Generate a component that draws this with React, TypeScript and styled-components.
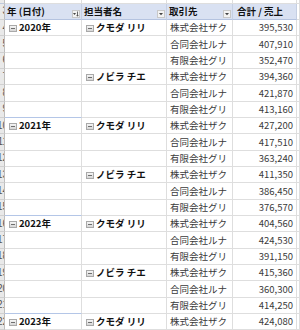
import React from "react";
import styled, { createGlobalStyle } from "styled-components";

const Global = createGlobalStyle`
  html, body { margin: 0; padding: 0; background: #ffffff; }
  body { font-family: "Noto Sans CJK JP", "Noto Sans", sans-serif; overflow: hidden; }
`;

const ROW_H = 16.33;

const Sheet = styled.div`
  display: grid;
  grid-template-columns: 5px 77px 85px 66px 64px 3px;
  grid-template-rows: 3.67px ${ROW_H}px repeat(19, ${ROW_H}px);
  width: 300px;
  height: 330px;
  overflow: hidden;
  font-size: 9.5px;
  line-height: 1;
`;

const RowHead = styled.div<{ $top?: boolean }>`
  box-sizing: border-box;
  background: #e9e9e9;
  border-right: 1px solid #bdbdbd;
  border-bottom: 1px solid ${(p) => (p.$top ? "#bfc9dc" : "#d0d0d0")};
  overflow: hidden;
  display: flex;
  align-items: center;
  justify-content: flex-end;
  color: #555;
  font-family: "Liberation Sans", sans-serif;
  font-size: 10px;
`;

const RowNum = styled.span`
  margin-right: -4px;
`;

const Blank = styled.div`
  box-sizing: border-box;
  border-right: 1px solid #dedede;
  border-bottom: 1px solid #dedede;
`;

const Head = styled.div<{ $pl: number }>`
  box-sizing: border-box;
  background: #d9e1f2;
  border-right: 1px solid #c5cfe2;
  border-bottom: 1px solid #b4c3e0;
  display: flex;
  align-items: center;
  padding-left: ${(p) => p.$pl}px;
  padding-right: 1px;
  font-weight: 700;
  color: #111;
  white-space: nowrap;
  position: relative;
`;

const HeadLabel = styled.span`
  flex: 1;
  padding-top: 1px;
`;

const FilterBtn = styled.span`
  box-sizing: border-box;
  width: 8px;
  height: 8px;
  margin-top: 5px;
  border: 1px solid #c8c8c8;
  background: #f3f3f3;
  display: flex;
  align-items: center;
  justify-content: center;
`;

const Cell = styled.div<{ $pl?: number; $right?: boolean; $bold?: boolean; $yearTop?: boolean }>`
  box-sizing: border-box;
  border-right: 1px solid #dedede;
  border-bottom: 1px solid #dedede;
  ${(p) => (p.$yearTop ? "border-top: 1px solid #b4c6e7; margin-top: -1px;" : "")}
  display: flex;
  align-items: center;
  justify-content: ${(p) => (p.$right ? "flex-end" : "flex-start")};
  padding-left: ${(p) => p.$pl ?? 3}px;
  padding-right: ${(p) => (p.$right ? 3 : 0)}px;
  padding-top: 1px;
  font-weight: ${(p) => (p.$bold ? 700 : 400)};
  color: ${(p) => (p.$bold ? "#111" : "#3a3a3a")};
  white-space: nowrap;
  overflow: hidden;
`;

const Collapse = styled.span`
  box-sizing: border-box;
  width: 8px;
  height: 7px;
  margin-right: 2px;
  border: 1px solid #a9a9a9;
  background: linear-gradient(#f5f5f5, #d6d6d6);
  position: relative;
  flex: none;
  &::after {
    content: "";
    position: absolute;
    left: 1px;
    right: 1px;
    top: 2px;
    height: 1px;
    background: #6e6e6e;
  }
`;

const SortIcon = () => (
  <svg width="6" height="6" viewBox="0 0 6 6">
    <path d="M0 2 L3 2 L1.5 4 Z" fill="#444" />
    <path d="M4.5 0.5 V5" stroke="#444" strokeWidth="0.8" />
    <path d="M3.6 4 L4.5 5.3 L5.4 4" fill="none" stroke="#444" strokeWidth="0.7" />
  </svg>
);

const DropIcon = () => (
  <svg width="6" height="6" viewBox="0 0 6 6">
    <path d="M1 2 L5 2 L3 4.3 Z" fill="#444" />
  </svg>
);

type Row = {
  year?: string;
  person?: string;
  company: string;
  value: string;
};

const data: Row[] = [
  { year: "2020年", person: "クモダ リリ", company: "株式会社ザク", value: "395,530" },
  { company: "合同会社ルナ", value: "407,910" },
  { company: "有限会社グリ", value: "352,470" },
  { person: "ノビラ チエ", company: "株式会社ザク", value: "394,360" },
  { company: "合同会社ルナ", value: "421,870" },
  { company: "有限会社グリ", value: "413,160" },
  { year: "2021年", person: "クモダ リリ", company: "株式会社ザク", value: "427,200" },
  { company: "合同会社ルナ", value: "417,510" },
  { company: "有限会社グリ", value: "363,240" },
  { person: "ノビラ チエ", company: "株式会社ザク", value: "411,350" },
  { company: "合同会社ルナ", value: "386,450" },
  { company: "有限会社グリ", value: "376,570" },
  { year: "2022年", person: "クモダ リリ", company: "株式会社ザク", value: "404,560" },
  { company: "合同会社ルナ", value: "424,530" },
  { company: "有限会社グリ", value: "391,150" },
  { person: "ノビラ チエ", company: "株式会社ザク", value: "415,360" },
  { company: "合同会社ルナ", value: "360,300" },
  { company: "有限会社グリ", value: "414,250" },
  { year: "2023年", person: "クモダ リリ", company: "株式会社ザク", value: "424,080" },
];

export default function App() {
  return (
    <>
      <Global />
      <Sheet>
        <RowHead $top />
        <Blank />
        <Blank />
        <Blank />
        <Blank />
        <Blank />

        <RowHead>
          <RowNum>3</RowNum>
        </RowHead>
        <Head $pl={2}>
          <HeadLabel>年 (日付)</HeadLabel>
          <FilterBtn>
            <SortIcon />
          </FilterBtn>
        </Head>
        <Head $pl={2}>
          <HeadLabel>担当者名</HeadLabel>
          <FilterBtn>
            <DropIcon />
          </FilterBtn>
        </Head>
        <Head $pl={2}>
          <HeadLabel>取引先</HeadLabel>
          <FilterBtn>
            <DropIcon />
          </FilterBtn>
        </Head>
        <Head $pl={4}>
          <HeadLabel>合計 / 売上</HeadLabel>
        </Head>
        <Blank />

        {data.map((r, i) => (
          <React.Fragment key={i}>
            <RowHead>
              <RowNum>{i + 4}</RowNum>
            </RowHead>
            <Cell $pl={4} $bold $yearTop={!!r.year && i > 0}>
              {r.year && (
                <>
                  <Collapse />
                  {r.year}
                </>
              )}
            </Cell>
            <Cell $pl={4} $bold>
              {r.person && (
                <>
                  <Collapse />
                  {r.person}
                </>
              )}
            </Cell>
            <Cell $pl={3}>{r.company}</Cell>
            <Cell $right>{r.value}</Cell>
            <Blank />
          </React.Fragment>
        ))}
      </Sheet>
    </>
  );
}
